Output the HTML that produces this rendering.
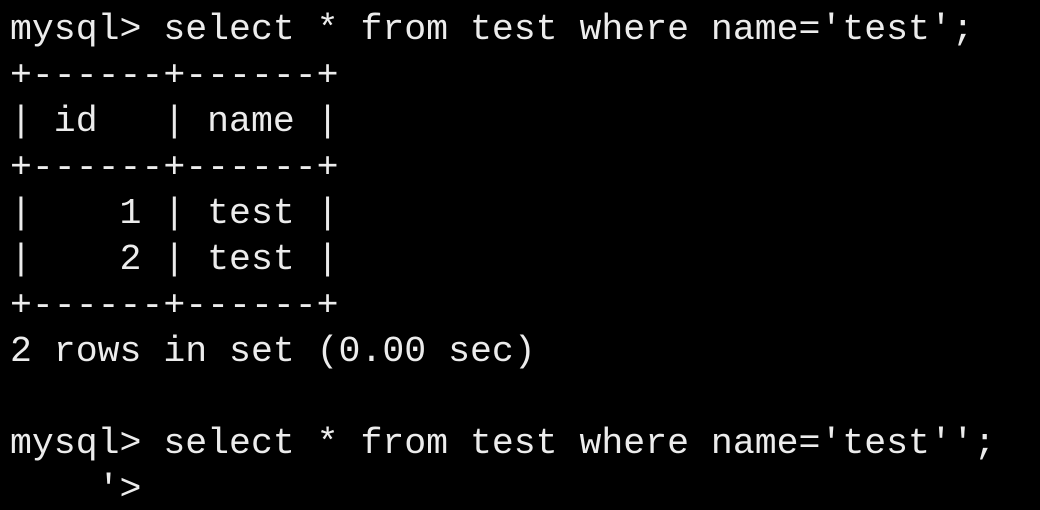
<!DOCTYPE html>
<html><head><meta charset="utf-8"><style>
html,body{margin:0;padding:0;background:#000;width:1040px;height:510px;overflow:hidden}
pre{margin:0;padding:7px 0 0 10px;font-family:"Liberation Mono",monospace;font-size:36.5px;line-height:46px;color:#ececec;white-space:pre}
</style></head><body><pre>mysql&gt; select * from test where name='test';
+------+------+
| id   | name |
+------+------+
|    1 | test |
|    2 | test |
+------+------+
2 rows in set (0.00 sec)

mysql&gt; select * from test where name='test'';
    '&gt;</pre></body></html>
